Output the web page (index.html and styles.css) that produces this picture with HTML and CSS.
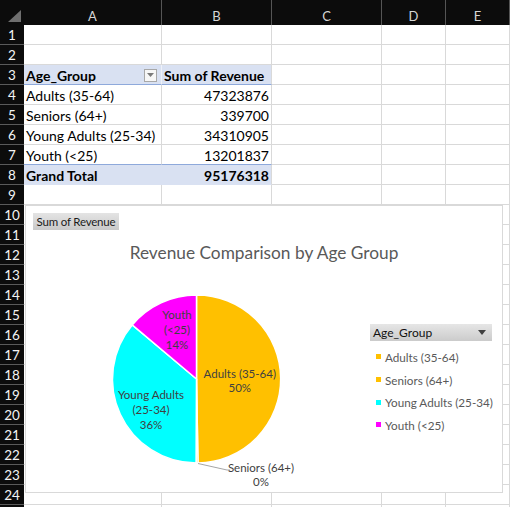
FILE: index.html
```html
<!DOCTYPE html>
<html>
<head>
<meta charset="utf-8">
<link rel="stylesheet" href="styles.css">
</head>
<body>
<div class="sheet">
  <div class="ch corner"><svg width="24" height="25" viewBox="0 0 24 25"><polygon points="21,10 21,22 8,22" fill="#6f6f6f"/></svg></div>
  <div class="ch">A</div><div class="ch">B</div><div class="ch">C</div><div class="ch">D</div><div class="ch">E</div>

  <div class="rh">1</div><div class="c"></div><div class="c"></div><div class="c"></div><div class="c"></div><div class="c"></div>
  <div class="rh">2</div><div class="c"></div><div class="c"></div><div class="c"></div><div class="c"></div><div class="c"></div>
  <div class="rh">3</div>
  <div class="c pv-h pv-h-a"><span>Age_Group</span><span class="dd"><svg width="7" height="4" viewBox="0 0 7 4"><polygon points="0,0 7,0 3.5,4" fill="#7a7a7a"/></svg></span></div>
  <div class="c pv-h">Sum of Revenue</div><div class="c"></div><div class="c"></div><div class="c"></div>
  <div class="rh">4</div><div class="c">Adults (35-64)</div><div class="c num">47323876</div><div class="c"></div><div class="c"></div><div class="c"></div>
  <div class="rh">5</div><div class="c">Seniors (64+)</div><div class="c num">339700</div><div class="c"></div><div class="c"></div><div class="c"></div>
  <div class="rh">6</div><div class="c">Young Adults (25-34)</div><div class="c num">34310905</div><div class="c"></div><div class="c"></div><div class="c"></div>
  <div class="rh">7</div><div class="c pv-last">Youth (&lt;25)</div><div class="c num pv-last">13201837</div><div class="c"></div><div class="c"></div><div class="c"></div>
  <div class="rh">8</div><div class="c pv-t pv-t-a">Grand Total</div><div class="c num pv-t">95176318</div><div class="c"></div><div class="c"></div><div class="c"></div>
  <div class="rh">9</div><div class="c"></div><div class="c"></div><div class="c"></div><div class="c"></div><div class="c"></div>
  <div class="rh">10</div><div class="c"></div><div class="c"></div><div class="c"></div><div class="c"></div><div class="c"></div>
  <div class="rh">11</div><div class="c"></div><div class="c"></div><div class="c"></div><div class="c"></div><div class="c"></div>
  <div class="rh">12</div><div class="c"></div><div class="c"></div><div class="c"></div><div class="c"></div><div class="c"></div>
  <div class="rh">13</div><div class="c"></div><div class="c"></div><div class="c"></div><div class="c"></div><div class="c"></div>
  <div class="rh">14</div><div class="c"></div><div class="c"></div><div class="c"></div><div class="c"></div><div class="c"></div>
  <div class="rh">15</div><div class="c"></div><div class="c"></div><div class="c"></div><div class="c"></div><div class="c"></div>
  <div class="rh">16</div><div class="c"></div><div class="c"></div><div class="c"></div><div class="c"></div><div class="c"></div>
  <div class="rh">17</div><div class="c"></div><div class="c"></div><div class="c"></div><div class="c"></div><div class="c"></div>
  <div class="rh">18</div><div class="c"></div><div class="c"></div><div class="c"></div><div class="c"></div><div class="c"></div>
  <div class="rh">19</div><div class="c"></div><div class="c"></div><div class="c"></div><div class="c"></div><div class="c"></div>
  <div class="rh">20</div><div class="c"></div><div class="c"></div><div class="c"></div><div class="c"></div><div class="c"></div>
  <div class="rh">21</div><div class="c"></div><div class="c"></div><div class="c"></div><div class="c"></div><div class="c"></div>
  <div class="rh">22</div><div class="c"></div><div class="c"></div><div class="c"></div><div class="c"></div><div class="c"></div>
  <div class="rh">23</div><div class="c"></div><div class="c"></div><div class="c"></div><div class="c"></div><div class="c"></div>
  <div class="rh">24</div><div class="c"></div><div class="c"></div><div class="c"></div><div class="c"></div><div class="c"></div>
  <div class="rh"></div><div class="c"></div><div class="c"></div><div class="c"></div><div class="c"></div><div class="c"></div>

  <div class="chart">
    <div class="field-btn">Sum of Revenue</div>
    <div class="chart-title">Revenue Comparison by Age Group</div>
    <div class="chart-body">
      <svg class="pie" width="330" height="229" viewBox="0 59 330 229">
        <path d="M171.5,174 L171.5,90 A84,84 0 0 1 172.97,257.99 Z" fill="#ffc000" stroke="#fff" stroke-width="1.5"/>
        <path d="M171.5,174 L172.97,257.99 A84,84 0 0 1 171.08,258 Z" fill="#ffc000" stroke="#fff" stroke-width="1.5"/>
        <path d="M171.5,174 L171.08,258 A84,84 0 0 1 107.22,119.92 Z" fill="#00ffff" stroke="#fff" stroke-width="1.5"/>
        <path d="M171.5,174 L107.22,119.92 A84,84 0 0 1 171.5,90 Z" fill="#ff00ff" stroke="#fff" stroke-width="1.5"/>
        <polyline points="173,258.5 202,265 205,265" fill="none" stroke="#a6a6a6" stroke-width="1"/>
        <g class="lbl">
          <text x="214.8" y="172.5">Adults (35-64)</text>
          <text x="214.8" y="187">50%</text>
          <text x="126" y="193.5">Young Adults</text>
          <text x="126" y="208.5">(25-34)</text>
          <text x="126" y="223.5">36%</text>
          <text x="152" y="114">Youth</text>
          <text x="152" y="129">(&lt;25)</text>
          <text x="152" y="144">14%</text>
          <text x="236" y="266.5">Seniors (64+)</text>
          <text x="236" y="281">0%</text>
        </g>
      </svg>
      <div class="legend">
        <div class="legend-head"><span>Age_Group</span><svg width="8" height="5" viewBox="0 0 8 5"><polygon points="0,0 8,0 4,5" fill="#404040"/></svg></div>
        <div class="legend-item"><span class="sw sw-gold"></span>Adults (35-64)</div>
        <div class="legend-item"><span class="sw sw-gold"></span>Seniors (64+)</div>
        <div class="legend-item"><span class="sw sw-cyan"></span>Young Adults (25-34)</div>
        <div class="legend-item"><span class="sw sw-mag"></span>Youth (&lt;25)</div>
      </div>
    </div>
  </div>
</div>
</body>
</html>
```

FILE: styles.css
```css
html, body {
  margin: 0;
  padding: 0;
  background: #ffffff;
  overflow: hidden;
}
body {
  width: 510px;
  height: 507px;
  font-family: Lato, "Liberation Sans", sans-serif;
  color: #000;
}
.sheet {
  position: relative;
  display: grid;
  grid-template-columns: 24px 138px 110px 110px 64px 64px;
  grid-template-rows: 25px;
  grid-auto-rows: 20px;
}
.ch {
  background: #0c0c0c;
  color: #d6d6d6;
  font-size: 13px;
  text-align: center;
  line-height: 17px;
  padding-top: 8px;
  box-sizing: border-box;
  border-right: 1px solid #555;
}
.corner {
  padding: 0;
  border-right: none;
}
.corner svg { display: block; }
.rh {
  background: #0c0c0c;
  color: #f4f4f4;
  font-size: 13.5px;
  text-align: center;
  line-height: 19px;
  padding-top: 1px;
  box-sizing: border-box;
  border-bottom: 1px solid #5a5a5a;
}
.c {
  box-sizing: border-box;
  border-right: 1px solid #d9d9d9;
  border-bottom: 1px solid #d9d9d9;
  font-size: 14px;
  line-height: 19px;
  padding: 1px 2px 0 2px;
  white-space: nowrap;
}
.num { text-align: right; padding-right: 2px; }
.pv-h {
  background: #d9e1f2;
  font-weight: bold;
  border-bottom-color: #8ea9db;
}
.pv-h-a {
  display: flex;
  justify-content: space-between;
  align-items: center;
  padding-right: 4px;
  border-right-color: #eef1f8;
}
.dd {
  width: 13px;
  height: 13px;
  box-sizing: border-box;
  border: 1px solid #a8a8a8;
  background: #f7f7f7;
  display: flex;
  align-items: center;
  justify-content: center;
}
.dd svg { display: block; }
.pv-last { border-bottom-color: #8ea9db; }
.pv-t {
  background: #d9e1f2;
  font-weight: bold;
  border-bottom-color: #d9e1f2;
}
.pv-t-a { border-right-color: #d9e1f2; }

.chart {
  position: absolute;
  left: 25px;
  top: 205px;
  width: 478px;
  height: 288px;
  box-sizing: border-box;
  background: #fff;
  border: 1px solid #d9d9d9;
}
.field-btn {
  position: absolute;
  left: 7px;
  top: 7px;
  width: 86px;
  height: 17px;
  box-sizing: border-box;
  background: linear-gradient(#e4e4e4, #c9c9c9);
  font-size: 11.5px;
  line-height: 17px;
  color: #1a1a1a;
  text-align: center;
  letter-spacing: -0.2px;
}
.chart-title {
  margin-top: 36px;
  height: 22px;
  line-height: 22px;
  text-align: center;
  font-size: 17.3px;
  color: #595959;
}
.chart-body {
  display: flex;
  margin-left: -1px;
}
.pie { display: block; flex: none; }
.lbl text {
  font-family: Lato, "Liberation Sans", sans-serif;
  font-size: 11.5px;
  fill: #404040;
  text-anchor: middle;
}
.legend {
  margin-top: 60px;
  margin-left: 15px;
  width: 122px;
  display: flex;
  flex-direction: column;
}
.legend-head {
  height: 17px;
  margin-bottom: 4.5px;
  background: linear-gradient(#e6e6e6, #cbcbcb);
  display: flex;
  align-items: center;
  justify-content: space-between;
  padding: 0 6px 0 3px;
  font-size: 12px;
  color: #111;
}
.legend-head svg { display: block; }
.legend-item {
  height: 22.7px;
  display: flex;
  align-items: center;
  gap: 4px;
  padding-left: 6px;
  font-size: 11.7px;
  color: #595959;
  white-space: nowrap;
}
.sw {
  width: 5px;
  height: 5px;
  flex: none;
}
.sw-gold { background: #ffc000; }
.sw-cyan { background: #00ffff; }
.sw-mag { background: #ff00ff; }
```
